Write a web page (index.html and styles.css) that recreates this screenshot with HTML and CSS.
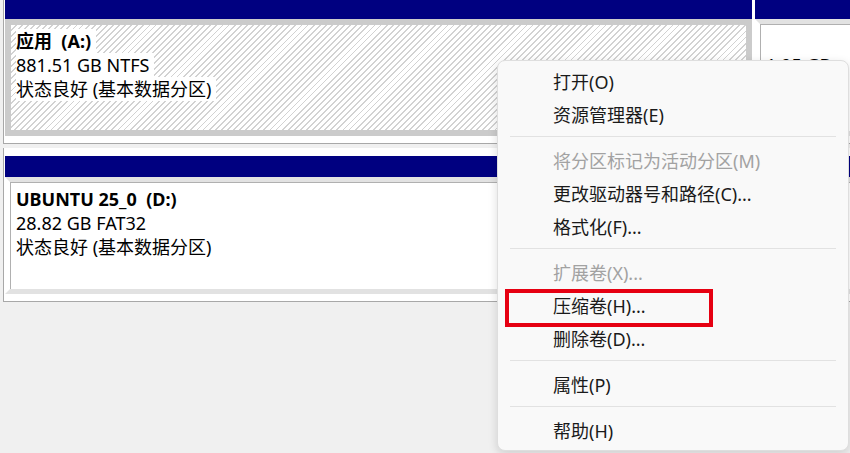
FILE: index.html
```html
<!DOCTYPE html>
<html lang="zh-CN">
<head>
<meta charset="utf-8">
<title>磁盘管理</title>
<link rel="stylesheet" href="styles.css">
</head>
<body>
<div class="disks">
  <div class="row">
    <div class="part part-a">
      <div class="bar"></div>
      <div class="cell hatched">
        <div class="ln name">应用&nbsp; (A:)</div>
        <div class="ln">881.51 GB NTFS</div>
        <div class="ln">状态良好 (基本数据分区)</div>
      </div>
    </div>
    <div class="part part-r">
      <div class="bar"></div>
      <div class="cell plain">
        <div class="ln">&nbsp;</div>
        <div class="ln">1.95 GB</div>
      </div>
    </div>
  </div>
  <div class="row">
    <div class="part part-full">
      <div class="bar"></div>
      <div class="cell plain">
        <div class="ln name">UBUNTU 25_0&nbsp; (D:)</div>
        <div class="ln">28.82 GB FAT32</div>
        <div class="ln">状态良好 (基本数据分区)</div>
      </div>
    </div>
  </div>
</div>

<div class="menu">
  <div class="item">打开(O)</div>
  <div class="item">资源管理器(E)</div>
  <div class="sep"></div>
  <div class="item disabled">将分区标记为活动分区(M)</div>
  <div class="item">更改驱动器号和路径(C)...</div>
  <div class="item">格式化(F)...</div>
  <div class="sep"></div>
  <div class="item disabled">扩展卷(X)...</div>
  <div class="item">压缩卷(H)...</div>
  <div class="item">删除卷(D)...</div>
  <div class="sep"></div>
  <div class="item">属性(P)</div>
  <div class="sep"></div>
  <div class="item">帮助(H)</div>
</div>

<div class="highlight"></div>
</body>
</html>
```

FILE: styles.css
```css
* { box-sizing: border-box; }

html, body {
  margin: 0;
  height: 100%;
}

body {
  background: #f0f0f0;
  overflow: hidden;
  font-family: "Noto Sans", "Noto Sans CJK SC", sans-serif;
  font-size: 18px;
  color: #000;
  position: relative;
}

.disks {
  margin-top: -10px;
  padding-left: 3px;
  width: 1000px;
}

.row {
  display: flex;
  gap: 3px;
  background: #fff;
  border-left: 1px solid #a8a8a8;
  border-bottom: 1px solid #a8a8a8;
  padding: 8px 0 7px 1px;
  margin-bottom: 4px;
}

.part {
  display: flex;
  flex-direction: column;
}

.part-a { width: 747px; }
.part-r { width: 200px; }
.part-full { flex: 1; }

.bar {
  height: 21px;
  background: #000080;
}

.cell {
  height: 117px;
  line-height: 24px;
}

.hatched {
  border: 6px solid #cbcbcb;
  padding: 4px 0 0 5px;
  background: repeating-linear-gradient(135deg, #ffffff 0 3px, #d2d2d2 3px 4.3px);
}

.plain {
  border: 5px solid #fff;
  border-top-color: #e2e2e2;
  border-bottom-color: #e2e2e2;
  box-shadow: inset 1px 1px 0 #b0b0b0;
  padding: 5px 0 0 6px;
  background: #fff;
}

.ln {
  width: fit-content;
  background: #fff;
  padding-right: 5px;
  white-space: nowrap;
}

.name { font-weight: 700; }

.menu {
  position: absolute;
  left: 497px;
  top: 60px;
  width: 352px;
  height: 391px;
  background: #f9f9f9;
  border: 1px solid #dedede;
  border-radius: 8px;
  box-shadow: 0 3px 10px rgba(0, 0, 0, 0.14);
  padding: 5px 0 4px;
}

.item {
  height: 33px;
  line-height: 33px;
  padding-left: 55px;
  color: #1a1a1a;
  white-space: nowrap;
}

.item.disabled { color: #a2a2a2; }

.sep {
  height: 1px;
  background: #e2e2e2;
  margin: 4px 12px 8px;
}

.highlight {
  position: absolute;
  left: 505px;
  top: 289px;
  width: 208px;
  height: 38px;
  border: 4px solid #e60012;
}
```
